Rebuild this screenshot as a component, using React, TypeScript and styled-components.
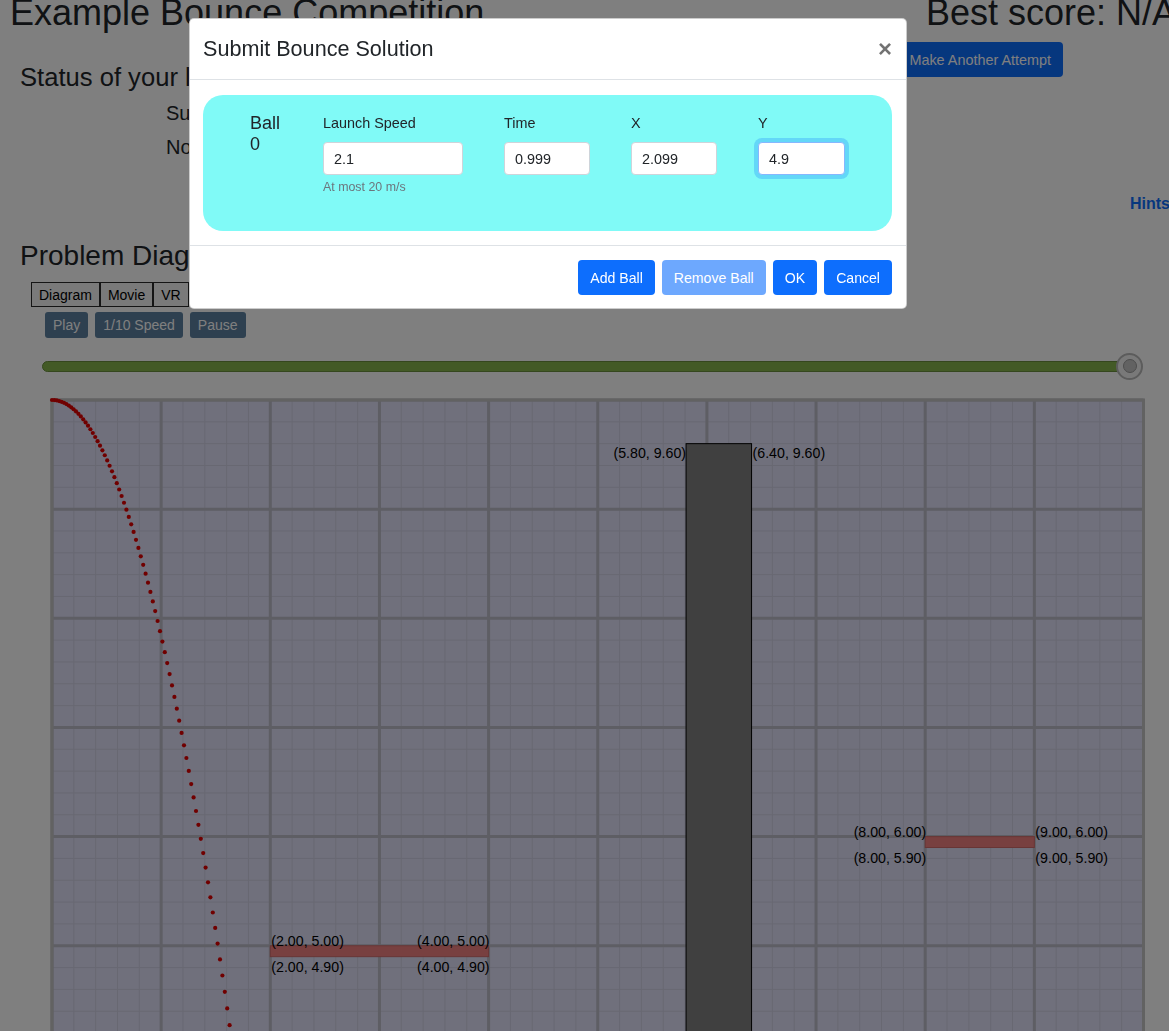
import React from "react";
import styled, { createGlobalStyle } from "styled-components";

const GlobalStyle = createGlobalStyle`
  html, body { margin: 0; padding: 0; overflow: hidden; background: #ffffff; }
  body {
    font-family: "Liberation Sans", Arial, Helvetica, sans-serif;
    color: #212529;
    font-size: 16px;
  }
  * { box-sizing: border-box; }
`;

const Page = styled.div`
  width: 1176px;
`;

const Header = styled.header`
  display: flex;
  justify-content: space-between;
  align-items: flex-start;
  margin-top: -9px;
  padding-left: 10px;
`;

const BigTitle = styled.h1`
  margin: 0;
  font-size: 36px;
  font-weight: 400;
  line-height: 1.2;
`;

const StatusRow = styled.section`
  display: flex;
  justify-content: space-between;
  align-items: flex-start;
  padding-left: 20px;
  padding-right: 113px;
`;

const StatusBlock = styled.div`
  padding-top: 28px;
`;

const StatusTitle = styled.h4`
  margin: 0;
  font-size: 25.6px;
  font-weight: 400;
  line-height: 30px;
`;

const StatusLine = styled.div<{ $gap: number }>`
  margin: ${(p) => p.$gap}px 0 0 146px;
  font-size: 20px;
  line-height: 24px;
`;

const AttemptButton = styled.button`
  margin-top: 8px;
  height: 35px;
  padding: 0 12px;
  border: none;
  border-radius: 4px;
  background: #0d6efd;
  color: #ffffff;
  font-family: inherit;
  font-size: 14.4px;
`;

const HintsRow = styled.div`
  display: flex;
  justify-content: flex-end;
  padding-right: 6px;
  margin-top: 33px;
  line-height: 24px;
`;

const HintsLink = styled.a`
  font-weight: 700;
  color: #0d6efd;
  text-decoration: none;
`;

const SectionTitle = styled.h3`
  margin: 23px 0 0;
  padding-left: 20px;
  font-size: 28px;
  font-weight: 400;
  line-height: 1.2;
`;

const TabBar = styled.div`
  display: flex;
  margin-top: 9.6px;
  padding-left: 31px;
`;

const Tab = styled.button`
  height: 25px;
  padding: 0 7px;
  border: 1px solid #2a2a2a;
  background: #f4f4f4;
  color: #000;
  font-family: inherit;
  font-size: 14px;
`;

const PlayBar = styled.div`
  display: flex;
  gap: 7px;
  margin-top: 5px;
  padding-left: 45px;
`;

const PlayButton = styled.button`
  height: 26px;
  padding: 0 8px;
  border: none;
  border-radius: 3px;
  background: #5c80a0;
  color: #ffffff;
  font-family: inherit;
  font-size: 14px;
`;

const SliderWrap = styled.div`
  display: flex;
  align-items: center;
  height: 28px;
  margin-top: 14px;
  padding-left: 42px;
`;

const SliderTrack = styled.div`
  position: relative;
  width: 1088px;
  height: 11px;
  border-radius: 6px;
  background: #86b44c;
  border: 1px solid #6a8f3c;
`;

const SliderThumb = styled.div`
  position: absolute;
  right: -14px;
  top: 50%;
  width: 27px;
  height: 27px;
  margin-top: -13.5px;
  border-radius: 50%;
  background: #f2f2f2;
  border: 2px solid #b8b8b8;
  display: flex;
  align-items: center;
  justify-content: center;
`;

const ThumbCore = styled.div`
  width: 14px;
  height: 14px;
  border-radius: 50%;
  background: #c4c4c4;
  border: 1px solid #9a9a9a;
`;

const ChartWrap = styled.div`
  margin-top: 20px;
  padding-left: 52px;
`;

const Backdrop = styled.div`
  position: fixed;
  inset: 0;
  background: rgba(0, 0, 0, 0.5);
  z-index: 10;
`;

const Dialog = styled.div`
  position: fixed;
  left: 189px;
  top: 18px;
  width: 718px;
  background: #ffffff;
  border: 1px solid rgba(0, 0, 0, 0.2);
  border-radius: 5px;
  z-index: 11;
`;

const ModalHeader = styled.div`
  display: flex;
  justify-content: space-between;
  align-items: center;
  padding: 14px 14px 14px 13px;
  border-bottom: 1px solid #dee2e6;
`;

const ModalTitle = styled.h5`
  margin: 0;
  font-size: 21.6px;
  font-weight: 400;
  line-height: 32px;
`;

const CloseButton = styled.button`
  padding: 0;
  border: none;
  background: transparent;
  font-family: inherit;
  font-size: 24px;
  font-weight: 700;
  line-height: 1;
  color: #000;
  opacity: 0.55;
`;

const ModalBody = styled.div`
  padding: 15px 14px 14px 13px;
`;

const BallCard = styled.div`
  display: flex;
  gap: 41px;
  height: 136px;
  padding: 18px 0 0 47px;
  border-radius: 20px;
  background: #80faf7;
`;

const BallName = styled.div`
  width: 32px;
  font-size: 18px;
  line-height: 21px;
`;

const Field = styled.div<{ $w: number }>`
  display: flex;
  flex-direction: column;
  width: ${(p) => p.$w}px;
`;

const FieldLabel = styled.label`
  font-size: 14.4px;
  line-height: 21px;
`;

const FieldInput = styled.input<{ $focus?: boolean }>`
  margin-top: 8px;
  height: 33px;
  width: 100%;
  padding: 0 10px;
  border: 1px solid ${(p) => (p.$focus ? "#86b7fe" : "#ced4da")};
  border-radius: 4px;
  background: #ffffff;
  color: #212529;
  font-family: inherit;
  font-size: 14.4px;
  outline: none;
  box-shadow: ${(p) => (p.$focus ? "0 0 0 4px rgba(13, 110, 253, 0.25)" : "none")};
`;

const HelpText = styled.div`
  margin-top: 3px;
  font-size: 12.4px;
  line-height: 18px;
  color: #6c757d;
  white-space: nowrap;
`;

const ModalFooter = styled.div`
  display: flex;
  justify-content: flex-end;
  gap: 7px;
  padding: 14px 14px 13px;
  border-top: 1px solid #dee2e6;
`;

const PrimaryButton = styled.button<{ $disabled?: boolean }>`
  height: 35px;
  padding: 0 12px;
  border: none;
  border-radius: 4px;
  background: #0d6efd;
  color: #ffffff;
  font-family: inherit;
  font-size: 14.1px;
  opacity: ${(p) => (p.$disabled ? 0.6 : 1)};
`;

const U = 109.15;
const SIZE = U * 10;

type Label = { text: string; x: number; y: number; anchor: "start" | "end" };

function Chart() {
  const minor: number[] = [];
  const major: number[] = [];
  for (let i = 0; i <= 50; i++) {
    const p = (i * U) / 5;
    if (i % 5 === 0) major.push(p);
    else minor.push(p);
  }
  const dots: { x: number; y: number }[] = [];
  for (let i = 0; i < 120; i++) {
    const x = i * 2.4;
    const y = 0.01982 * x * x;
    if (y > 720) break;
    dots.push({ x, y });
  }
  const boxTop = 0.4 * U;
  const pA = { x: 2 * U, y: 5 * U, w: 2 * U, h: 0.1 * U };
  const pB = { x: 8 * U, y: 4 * U, w: 1 * U, h: 0.1 * U };
  const boxL = 5.8 * U + 1;
  const boxR = 6.4 * U + 1;
  const labels: Label[] = [
    { text: "(5.80, 9.60)", x: boxL, y: boxTop + 14.4, anchor: "end" },
    { text: "(6.40, 9.60)", x: boxR + 1, y: boxTop + 14.4, anchor: "start" },
    { text: "(2.00, 5.00)", x: pA.x + 1, y: pA.y + 0.5, anchor: "start" },
    { text: "(4.00, 5.00)", x: pA.x + pA.w + 1, y: pA.y + 0.5, anchor: "end" },
    { text: "(2.00, 4.90)", x: pA.x + 1, y: pA.y + pA.h + 15, anchor: "start" },
    { text: "(4.00, 4.90)", x: pA.x + pA.w + 1, y: pA.y + pA.h + 15, anchor: "end" },
    { text: "(8.00, 6.00)", x: pB.x + 1, y: pB.y + 0.5, anchor: "end" },
    { text: "(9.00, 6.00)", x: pB.x + pB.w + 1, y: pB.y + 0.5, anchor: "start" },
    { text: "(8.00, 5.90)", x: pB.x + 1, y: pB.y + pB.h + 15, anchor: "end" },
    { text: "(9.00, 5.90)", x: pB.x + pB.w + 1, y: pB.y + pB.h + 15, anchor: "start" },
  ];
  return (
    <svg width={SIZE} height={SIZE} style={{ overflow: "visible", display: "block" }}>
      <rect x={0} y={0} width={SIZE} height={SIZE} fill="#e0e0f8" />
      {minor.map((p) => (
        <g key={"m" + p}>
          <line x1={p} y1={0} x2={p} y2={SIZE} stroke="#d0d0e4" strokeWidth={1} />
          <line x1={0} y1={p} x2={SIZE} y2={p} stroke="#d0d0e4" strokeWidth={1} />
        </g>
      ))}
      {major.map((p) => (
        <g key={"M" + p}>
          <line x1={p} y1={0} x2={p} y2={SIZE} stroke="#bcbcc8" strokeWidth={3} />
          <line x1={0} y1={p} x2={SIZE} y2={p} stroke="#bcbcc8" strokeWidth={3} />
        </g>
      ))}
      <rect x={0} y={0} width={SIZE} height={SIZE} fill="none" stroke="#c4c4c4" strokeWidth={3} />
      <rect x={boxL} y={boxTop} width={boxR - boxL} height={SIZE} fill="#808080" stroke="#000" strokeWidth={1} />
      <rect x={pA.x} y={pA.y} width={pA.w} height={pA.h} fill="#f08080" stroke="#d06a6a" strokeWidth={1} />
      <rect x={pB.x} y={pB.y} width={pB.w} height={pB.h} fill="#f08080" stroke="#d06a6a" strokeWidth={1} />
      {dots.map((d, i) => (
        <circle key={i} cx={d.x} cy={d.y} r={2.1} fill="#e00000" />
      ))}
      {labels.map((l) => (
        <text
          key={l.text + l.x}
          x={l.x}
          y={l.y}
          textAnchor={l.anchor}
          fontSize={14.2}
          fontFamily='"Liberation Sans", Arial, sans-serif'
          fill="#000"
        >
          {l.text}
        </text>
      ))}
    </svg>
  );
}

export default function App() {
  return (
    <>
      <GlobalStyle />
      <Page>
        <Header>
          <BigTitle>Example Bounce Competition</BigTitle>
          <BigTitle>Best score: N/A</BigTitle>
        </Header>
        <StatusRow>
          <StatusBlock>
            <StatusTitle>Status of your last attempt</StatusTitle>
            <StatusLine $gap={9}>Submitted: No</StatusLine>
            <StatusLine $gap={10}>No solution submitted yet</StatusLine>
          </StatusBlock>
          <AttemptButton>Make Another Attempt</AttemptButton>
        </StatusRow>
        <HintsRow>
          <HintsLink href="#">Hints</HintsLink>
        </HintsRow>
        <SectionTitle>Problem Diagram</SectionTitle>
        <TabBar>
          <Tab>Diagram</Tab>
          <Tab>Movie</Tab>
          <Tab>VR</Tab>
        </TabBar>
        <PlayBar>
          <PlayButton>Play</PlayButton>
          <PlayButton>1/10 Speed</PlayButton>
          <PlayButton>Pause</PlayButton>
        </PlayBar>
        <SliderWrap>
          <SliderTrack>
            <SliderThumb>
              <ThumbCore />
            </SliderThumb>
          </SliderTrack>
        </SliderWrap>
        <ChartWrap>
          <Chart />
        </ChartWrap>
      </Page>
      <Backdrop />
      <Dialog>
        <ModalHeader>
          <ModalTitle>Submit Bounce Solution</ModalTitle>
          <CloseButton>×</CloseButton>
        </ModalHeader>
        <ModalBody>
          <BallCard>
            <BallName>
              <div>Ball</div>
              <div>0</div>
            </BallName>
            <Field $w={140}>
              <FieldLabel>Launch Speed</FieldLabel>
              <FieldInput defaultValue="2.1" />
              <HelpText>At most 20 m/s</HelpText>
            </Field>
            <Field $w={86}>
              <FieldLabel>Time</FieldLabel>
              <FieldInput defaultValue="0.999" />
            </Field>
            <Field $w={86}>
              <FieldLabel>X</FieldLabel>
              <FieldInput defaultValue="2.099" />
            </Field>
            <Field $w={87}>
              <FieldLabel>Y</FieldLabel>
              <FieldInput defaultValue="4.9" $focus />
            </Field>
          </BallCard>
        </ModalBody>
        <ModalFooter>
          <PrimaryButton>Add Ball</PrimaryButton>
          <PrimaryButton $disabled>Remove Ball</PrimaryButton>
          <PrimaryButton>OK</PrimaryButton>
          <PrimaryButton>Cancel</PrimaryButton>
        </ModalFooter>
      </Dialog>
    </>
  );
}
